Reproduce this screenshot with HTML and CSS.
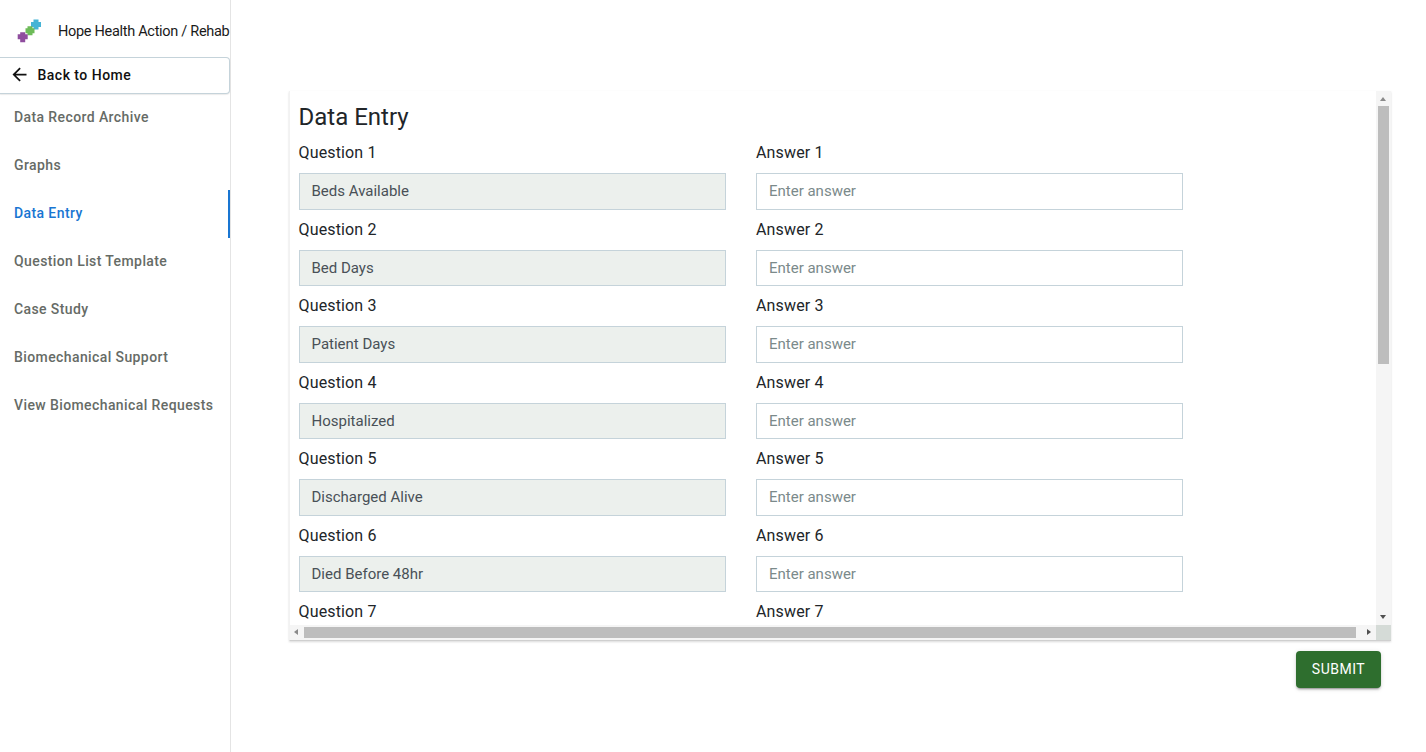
FILE: index.html
```html
<!DOCTYPE html>
<html lang="en">
<head>
<meta charset="utf-8">
<title>Data Entry</title>
<link rel="stylesheet" href="styles.css">
</head>
<body>
<div class="app">
  <aside class="sidebar">
    <header class="brand">
      <svg class="logo" width="26" height="26" viewBox="0 0 26 26" aria-hidden="true">
        <path class="logo-blue" d="M17.500 1.500h5v2.500h2.500v5h-2.500v2.500h-5v-2.500h-2.500v-5h2.500z"/>
        <path class="logo-green" d="M11.500 8.200h5v2h2v5h-2v2h-5v-2h-2v-5h2z"/>
        <path class="logo-purple" d="M4.200 14.200h5v2h2.500v5h-2.500v3h-5v-3h-2.500v-5h2.500z"/>
      </svg>
      <span class="brand-name">Hope Health Action / Rehab</span>
    </header>
    <button class="back" type="button">
      <svg class="back-icon" viewBox="0 0 24 24" aria-hidden="true">
        <path d="M20 11H7.830l5.590-5.590L12 4l-8 8 8 8 1.410-1.410L7.830 13H20v-2z"/>
      </svg>
      <span>Back to Home</span>
    </button>
    <nav class="nav">
      <a class="nav-item">Data Record Archive</a>
      <a class="nav-item">Graphs</a>
      <a class="nav-item active">Data Entry</a>
      <a class="nav-item">Question List Template</a>
      <a class="nav-item">Case Study</a>
      <a class="nav-item">Biomechanical Support</a>
      <a class="nav-item">View Biomechanical Requests</a>
    </nav>
  </aside>
  <main class="main">
    <section class="card">
      <div class="viewport">
        <h1 class="title">Data Entry</h1>
        <div class="row"><div class="field"><label>Question 1</label><input class="ro" readonly value="Beds Available"></div><div class="field"><label>Answer 1</label><input placeholder="Enter answer"></div></div>
        <div class="row"><div class="field"><label>Question 2</label><input class="ro" readonly value="Bed Days"></div><div class="field"><label>Answer 2</label><input placeholder="Enter answer"></div></div>
        <div class="row"><div class="field"><label>Question 3</label><input class="ro" readonly value="Patient Days"></div><div class="field"><label>Answer 3</label><input placeholder="Enter answer"></div></div>
        <div class="row"><div class="field"><label>Question 4</label><input class="ro" readonly value="Hospitalized"></div><div class="field"><label>Answer 4</label><input placeholder="Enter answer"></div></div>
        <div class="row"><div class="field"><label>Question 5</label><input class="ro" readonly value="Discharged Alive"></div><div class="field"><label>Answer 5</label><input placeholder="Enter answer"></div></div>
        <div class="row"><div class="field"><label>Question 6</label><input class="ro" readonly value="Died Before 48hr"></div><div class="field"><label>Answer 6</label><input placeholder="Enter answer"></div></div>
        <div class="row"><div class="field"><label>Question 7</label></div><div class="field"><label>Answer 7</label></div></div>
      </div>
      <div class="vbar" aria-hidden="true">
        <span class="arrow up"></span>
        <div class="vtrack"><span class="vthumb"></span></div>
        <span class="arrow down"></span>
      </div>
      <div class="hbar" aria-hidden="true">
        <span class="arrow left"></span>
        <div class="htrack"><span class="hthumb"></span></div>
        <span class="arrow right"></span>
      </div>
      <div class="corner"></div>
    </section>
    <div class="actions">
      <button class="submit" type="button">Submit</button>
    </div>
  </main>
</div>
</body>
</html>
```
FILE: styles.css
```css
* { box-sizing: border-box; }
html, body { margin: 0; height: 100%; overflow: hidden; }
body { font-family: Roboto, "Liberation Sans", sans-serif; background: #fff; color: #212529; }
.app { display: flex; height: 752px; }

.sidebar { width: 231px; flex: none; border-right: 1px solid #e4e4e4; }
.brand { height: 57px; display: flex; align-items: center; padding: 6px 0 0 16px; gap: 16px; }
.logo { flex: none; filter: blur(.6px); margin-top: -1px; }
.logo-blue { fill: #45b4d6; }
.logo-green { fill: #6dbb58; }
.logo-purple { fill: #8f4d9e; }
.brand-name { font-size: 14.500px; color: #1a1a1a; white-space: nowrap; letter-spacing: -.3px; }

.back { display: flex; align-items: center; gap: 8px; width: 230px; height: 37px; padding: 0 0 2px 8.500px; border: 1px solid #c5d3da; border-left: 0; border-radius: 0 4px 4px 0; background: #fff; font: 500 14px Roboto, sans-serif; color: #111; box-shadow: 0 1px 1px rgba(0,0,0,.08); letter-spacing: .48px; }
.back-icon { fill: #111; width: 21px; height: 21px; flex: none; }

.nav { display: flex; flex-direction: column; }
.nav-item { display: flex; align-items: center; height: 48px; padding: 0 0 2px 14px; font-size: 14px; font-weight: 500; color: #666b66; white-space: nowrap; letter-spacing: .4px; }
.nav-item.active { color: #1976d2; border-right: 2px solid #1976d2; width: 230px; }

.main { flex: 1; min-width: 0; padding: 91px 35px 0 58px; display: flex; flex-direction: column; }
.card { height: 550px; display: grid; grid-template-columns: 1fr 15px; grid-template-rows: 1fr 15px; border-left: 1px solid #f2f2f2; border-bottom: 1px solid #cfcfcf; box-shadow: 0 1px 2px rgba(0,0,0,.15); background: #fff; }
.viewport { min-width: 0; min-height: 0; overflow: hidden; padding: 10px 0 0 8.500px; }
.title { margin: 0 0 8px; font-size: 24px; font-weight: 400; line-height: 32px; color: #212529; }
.row { display: flex; gap: 30.300px; height: 76.500px; }
.field { width: 427.200px; display: flex; flex-direction: column; }
.field label { font-size: 16px; line-height: 24px; height: 32px; color: #212529; letter-spacing: .15px; }
.field input { height: 36.500px; width: 100%; padding: 0 12px; border: 1px solid #c5d3da; background: #fff; font: 400 15px Roboto, sans-serif; color: #495057; outline: 0; border-radius: 0; }
.field input::placeholder { color: #7b8a8b; opacity: 1; }
.field input.ro { background: #ecf0ed; }

.vbar { display: flex; flex-direction: column; background: #f5f5f5; }
.hbar { display: flex; background: #f5f5f5; }
.corner { background: #d5dbd7; }
.vtrack { flex: 1; padding: 0 2px; }
.htrack { flex: 1; padding: 2px 0; }
.vthumb { display: block; height: 258px; background: #bdbdbd; }
.hthumb { display: block; width: 1052px; height: 100%; background: #bdbdbd; }
.arrow { flex: none; display: block; width: 0; height: 0; border-style: solid; border-color: transparent; }
.up, .down { border-width: 4px 3.500px; margin: 0 4px; }
.up { border-top-width: 0; border-bottom-color: #8a8a8a; margin-top: 6px; margin-bottom: 5px; }
.down { border-bottom-width: 0; border-top-color: #505050; margin-top: 3px; margin-bottom: 6px; }
.left, .right { border-width: 3.500px 4px; margin: 4px 5px; }
.left { border-left-width: 0; border-right-color: #8a8a8a; margin-left: 4px; margin-right: 6px; }
.right { border-right-width: 0; border-left-color: #505050; margin-left: 6px; margin-right: 5px; }

.actions { display: flex; justify-content: flex-end; padding: 10px 10px 0 0; }
.submit { width: 85px; height: 37px; padding: 0 0 2px; border: 0; border-radius: 4px; background: #2e6e2e; color: #fff; font: 400 14px Roboto, sans-serif; text-transform: uppercase; letter-spacing: .5px; box-shadow: 0 3px 1px -2px rgba(0,0,0,.2), 0 2px 2px 0 rgba(0,0,0,.14), 0 1px 5px 0 rgba(0,0,0,.12); }
```
